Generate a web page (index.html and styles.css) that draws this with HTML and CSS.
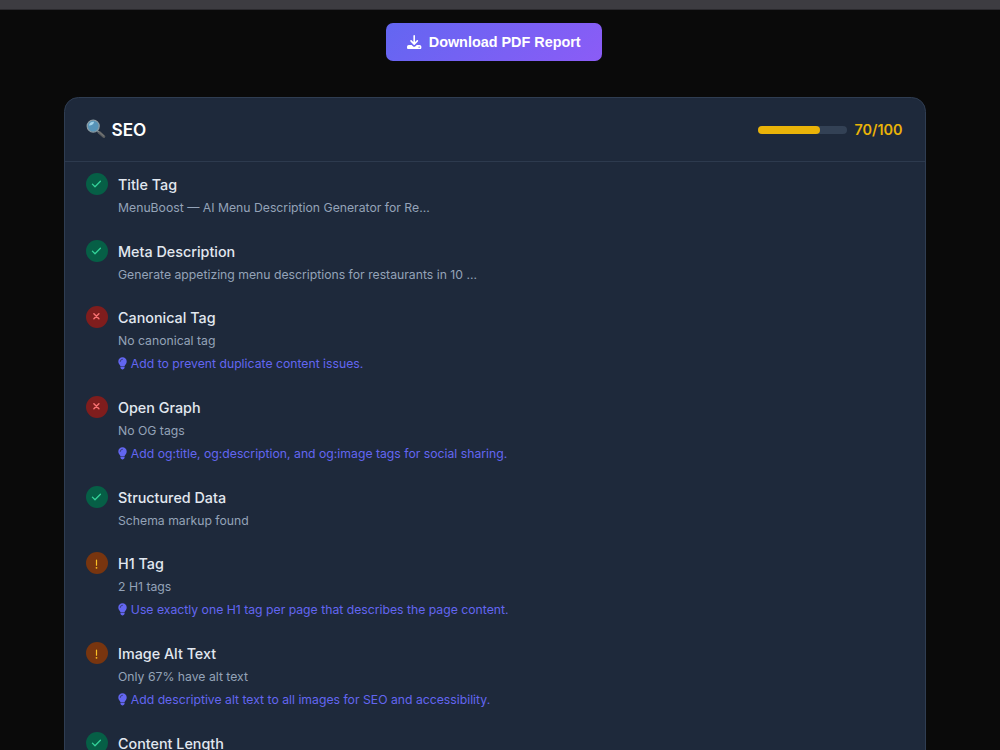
FILE: index.html
```html
<!DOCTYPE html>
<html lang="en">
<head>
  <meta charset="UTF-8" />
  <meta name="viewport" content="width=device-width, initial-scale=1.0"/>
  <title>SEO Report</title>
  <link rel="stylesheet" href="styles.css">
</head>
<body>

  <svg class="sprite" xmlns="http://www.w3.org/2000/svg">
    <symbol id="check" viewBox="0 0 22 22">
      <path d="M6.4 11.1 9 13.7 14.4 8.2" fill="none" stroke="currentColor" stroke-width="1.3" stroke-linecap="round" stroke-linejoin="round"/>
    </symbol>
    <symbol id="cross" viewBox="0 0 22 22">
      <path d="M7.9 7.8 12.9 12.8M12.9 7.8 7.9 12.8" fill="none" stroke="currentColor" stroke-width="1.5" stroke-linecap="round"/>
    </symbol>
    <symbol id="warn" viewBox="0 0 22 22">
      <path d="M10.5 8v5.2" fill="none" stroke="currentColor" stroke-width="1.2" stroke-linecap="round"/>
      <circle cx="10.5" cy="15.8" r="0.9" fill="currentColor"/>
    </symbol>
    <symbol id="bulb" viewBox="0 0 9 13">
      <path d="M4.5 0.3A4.2 4.2 0 0 0 .3 4.5c0 1.6.8 2.5 1.5 3.4.3.4.5.8.5 1.2h4.4c0-.4.2-.8.5-1.2.7-.9 1.5-1.8 1.5-3.4A4.2 4.2 0 0 0 4.5.3zM2.4 9.5h4.2v1.1a1.9 1.9 0 0 1-1.9 1.8h-.4a1.9 1.9 0 0 1-1.9-1.8z" fill="currentColor"/>
      <path d="M2.2 4.5A2.3 2.3 0 0 1 4.5 2.2" fill="none" stroke="#1e293b" stroke-width=".6" stroke-linecap="round"/>
    </symbol>
  </svg>

  <div class="top-bar"></div>

  <div class="actions">
    <button class="download">
      <svg class="download-icon" viewBox="0 0 512 512">
        <path d="M256 32v270M144 210l112 112 112-112" fill="none" stroke="currentColor" stroke-width="58" stroke-linecap="round" stroke-linejoin="round"/>
        <path fill-rule="evenodd" d="M64 352h101l46 45a64 64 0 0 0 90 0l46-45h101a64 64 0 0 1 64 64v32a64 64 0 0 1-64 64H64a64 64 0 0 1-64-64v-32a64 64 0 0 1 64-64zM432 408a24 24 0 1 0 0 48 24 24 0 0 0 0-48z" fill="currentColor"/>
      </svg>
      Download PDF Report
    </button>
  </div>

  <div class="card">
    <div class="card-header">
      <h2>
        <svg class="lens" viewBox="0 0 20 20">
          <path d="M11.7 12.2 13.4 13.8" stroke="#9aa5ab" stroke-width="1.8"/>
          <path d="M13.5 13.7 17.8 17.5" stroke="#5b5e60" stroke-width="3" stroke-linecap="round"/>
          <path d="M13.5 13.2 17.6 16.8" stroke="#858687" stroke-width=".8" stroke-linecap="round"/>
          <circle cx="7.2" cy="7.1" r="6" fill="#5794b8" stroke="#8b9ca4" stroke-width="1.3"/>
          <path d="M3 6.6A4.4 4.4 0 0 1 8 2.7C8 5 5.5 6.6 3 6.6z" fill="#a4d4ea"/>
        </svg>
        SEO
      </h2>
      <div class="score">
        <div class="bar"><div class="bar-fill" style="width: 70%"></div></div>
        <span>70/100</span>
      </div>
    </div>

    <div class="checks">
      <div class="check">
        <svg class="status pass"><use href="#check"/></svg>
        <div>
          <div class="name">Title Tag</div>
          <div class="detail">MenuBoost — AI Menu Description Generator for Re...</div>
        </div>
      </div>
      <div class="check">
        <svg class="status pass"><use href="#check"/></svg>
        <div>
          <div class="name">Meta Description</div>
          <div class="detail">Generate appetizing menu descriptions for restaurants in 10 ...</div>
        </div>
      </div>
      <div class="check">
        <svg class="status fail"><use href="#cross"/></svg>
        <div>
          <div class="name">Canonical Tag</div>
          <div class="detail">No canonical tag</div>
          <div class="tip"><svg><use href="#bulb"/></svg>Add to prevent duplicate content issues.</div>
        </div>
      </div>
      <div class="check">
        <svg class="status fail"><use href="#cross"/></svg>
        <div>
          <div class="name">Open Graph</div>
          <div class="detail">No OG tags</div>
          <div class="tip"><svg><use href="#bulb"/></svg>Add og:title, og:description, and og:image tags for social sharing.</div>
        </div>
      </div>
      <div class="check">
        <svg class="status pass"><use href="#check"/></svg>
        <div>
          <div class="name">Structured Data</div>
          <div class="detail">Schema markup found</div>
        </div>
      </div>
      <div class="check">
        <svg class="status warning"><use href="#warn"/></svg>
        <div>
          <div class="name">H1 Tag</div>
          <div class="detail">2 H1 tags</div>
          <div class="tip"><svg><use href="#bulb"/></svg>Use exactly one H1 tag per page that describes the page content.</div>
        </div>
      </div>
      <div class="check">
        <svg class="status warning"><use href="#warn"/></svg>
        <div>
          <div class="name">Image Alt Text</div>
          <div class="detail">Only 67% have alt text</div>
          <div class="tip"><svg><use href="#bulb"/></svg>Add descriptive alt text to all images for SEO and accessibility.</div>
        </div>
      </div>
      <div class="check">
        <svg class="status pass"><use href="#check"/></svg>
        <div>
          <div class="name">Content Length</div>
        </div>
      </div>
    </div>
  </div>

</body>
</html>
```

FILE: styles.css
```css
:root {
  --bg: #0a0a0a;
  --card: #1e293b;
  --border: #334155;
  --text: #e2e8f0;
  --muted: #94a3b8;
  --accent: #6366f1;
  --score: #eab308;
}

* {
  box-sizing: border-box;
}

body {
  margin: 0;
  height: 750px;
  overflow: hidden;
  background: var(--bg);
  color: var(--text);
  font-family: Inter, sans-serif;
}

.sprite {
  display: none;
}

.top-bar {
  height: 10px;
  background: #3d3c41;
  border-bottom: 1px solid #2b2a2e;
}

.actions {
  display: flex;
  justify-content: center;
  padding: 13.3px 12px 36px 0;
}

.download {
  display: flex;
  align-items: center;
  gap: 7px;
  height: 37.7px;
  padding: 0 21.5px;
  border: none;
  border-radius: 7px;
  background: linear-gradient(135deg, #6366f1, #8b5cf6);
  color: #fff;
  font: bold 14.4px "Liberation Sans", sans-serif;
  white-space: nowrap;
}

.download-icon {
  width: 14.4px;
  height: 14.4px;
}

.card {
  width: 862px;
  margin-left: 63.5px;
  background: var(--card);
  border: 1px solid #2f3d52;
  border-radius: 14.4px;
}

.card-header {
  display: flex;
  justify-content: space-between;
  align-items: center;
  height: 64px;
  padding: 0 22px 0 21.5px;
  border-bottom: 1px solid #2d3a4e;
}

.card-header h2 {
  display: flex;
  align-items: center;
  gap: 5.5px;
  margin: 0;
  color: #fff;
  font-size: 17.2px;
  font-weight: 600;
}

.lens {
  width: 20px;
  height: 20px;
}

.score {
  display: flex;
  align-items: center;
  gap: 7.2px;
  color: var(--score);
  font-size: 14.4px;
  font-weight: 600;
}

.bar {
  width: 89.7px;
  height: 8px;
  margin-top: 1px;
  border-radius: 4px;
  background: var(--border);
}

.bar-fill {
  height: 100%;
  border-radius: 4px;
  background: var(--score);
}

.checks {
  padding-top: 0.4px;
}

.check {
  display: flex;
  gap: 10px;
  padding: 10.75px 21.5px;
}

.status {
  flex: none;
  width: 22px;
  height: 22px;
  border-radius: 50%;
}

.pass {
  background: #065f46;
  color: #34d399;
}

.fail {
  background: #7f1d1d;
  color: #f87171;
}

.warning {
  background: #78350f;
  color: #fbbf24;
}

.name {
  font-size: 14.35px;
  font-weight: 500;
  line-height: 23px;
}

.detail {
  padding-top: 1px;
  color: var(--muted);
  font-size: 12.22px;
  line-height: 21px;
}

.tip {
  display: flex;
  align-items: center;
  gap: 3.8px;
  padding-top: 1.8px;
  color: var(--accent);
  font-size: 12.22px;
  line-height: 21.5px;
}

.tip svg {
  width: 9px;
  height: 13px;
}
```
